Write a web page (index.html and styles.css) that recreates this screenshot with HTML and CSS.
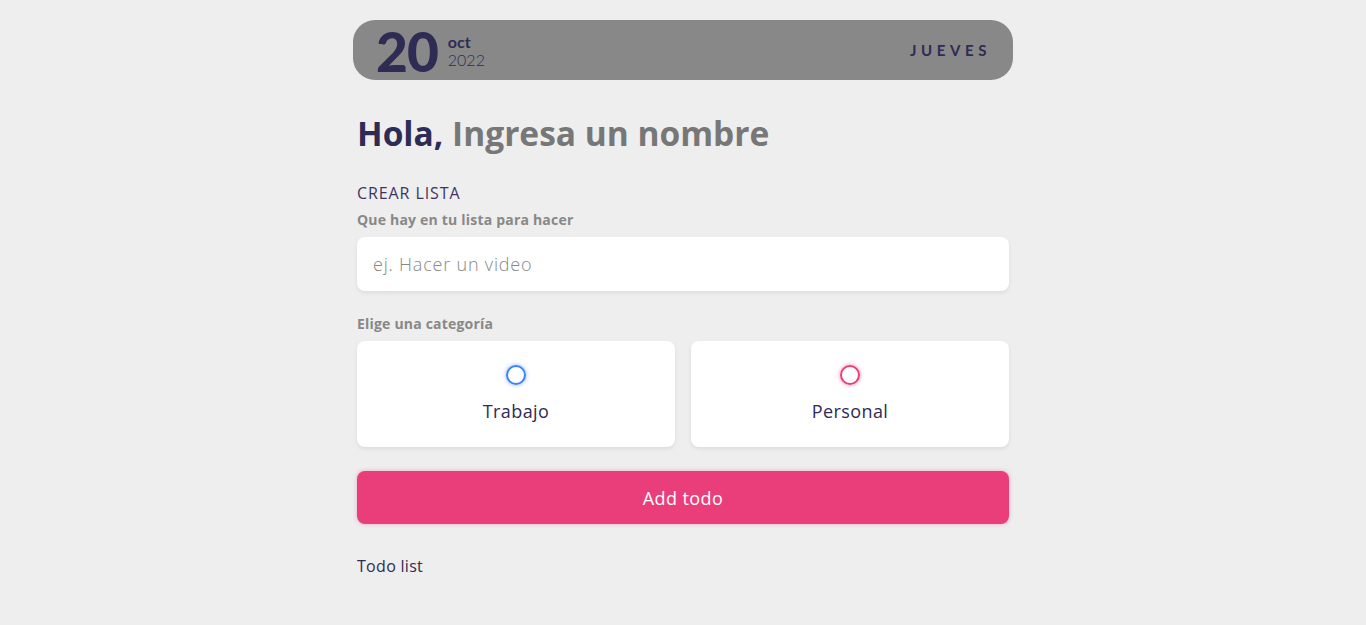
FILE: index.html
```html
<!DOCTYPE html>
<html lang="es">
<head>
<meta charset="utf-8">
<title>Todo</title>
<link rel="stylesheet" href="styles.css">
</head>
<body>
<main class="page">
  <header class="datebar">
    <div class="date">
      <span class="day">20</span>
      <span class="monthyear">
        <span class="month">oct</span>
        <span class="year">2022</span>
      </span>
    </div>
    <span class="weekday">JUEVES</span>
  </header>

  <h1 class="greeting">Hola, <span class="name">Ingresa un nombre</span></h1>

  <section class="create">
    <h2 class="section-title">CREAR LISTA</h2>
    <label class="field-label">Que hay en tu lista para hacer</label>
    <div class="input">ej. Hacer un video</div>

    <label class="field-label cat-label">Elige una categoría</label>
    <div class="options">
      <div class="option">
        <span class="bubble blue"></span>
        <span class="option-text">Trabajo</span>
      </div>
      <div class="option">
        <span class="bubble pink"></span>
        <span class="option-text">Personal</span>
      </div>
    </div>

    <button class="add">Add todo</button>
  </section>

  <h3 class="list-title">Todo list</h3>
</main>
</body>
</html>
```

FILE: styles.css
```css
* { box-sizing: border-box; }
html, body { margin: 0; padding: 0; }
body {
  background: #eeeeee;
  font-family: "Open Sans", "Noto Sans", sans-serif;
  color: #2e2b55;
}
.page {
  width: 652px;
  margin: 0 auto;
  padding-top: 20px;
}
.datebar {
  margin: 0 -4px;
  height: 60px;
  background: #888888;
  border-radius: 22px;
  display: flex;
  align-items: center;
  justify-content: space-between;
  padding: 0 25px 0 23px;
  font-family: Lato, sans-serif;
  color: #2e2b55;
}
.date { display: flex; align-items: center; gap: 10px; }
.day { font-size: 55px; font-weight: 900; line-height: 1; letter-spacing: -1px; margin-top: 2px; }
.monthyear { display: flex; flex-direction: column; line-height: 18px; margin-top: 2px; }
.month { font-size: 16px; font-weight: 700; }
.year { font-size: 16px; font-weight: 300; }
.weekday { font-size: 15px; font-weight: 700; letter-spacing: 4.6px; margin-right: -3px; }

.greeting {
  margin: 33px 0 0 0;
  font-size: 33.5px;
  font-weight: 700;
  line-height: 40px;
  color: #2e2b55;
}
.name { color: #777777; }

.create { margin-top: 30px; }
.section-title {
  margin: 0;
  font-size: 16px;
  font-weight: 400;
  letter-spacing: 0.9px;
  line-height: 20px;
  color: #3e3463;
}
.field-label {
  display: block;
  margin-top: 8px;
  font-size: 14px;
  font-weight: 700;
  letter-spacing: 0.2px;
  line-height: 17px;
  color: #888888;
}
.input {
  margin-top: 9px;
  height: 54px;
  background: #ffffff;
  border-radius: 8px;
  box-shadow: 0 2px 4px rgba(0,0,0,0.08);
  display: flex;
  align-items: center;
  padding: 0 16px;
  font-size: 18px;
  font-weight: 300;
  letter-spacing: 0.8px;
  color: #888888;
}
.cat-label { margin-top: 24px; }
.options {
  margin-top: 9px;
  display: grid;
  grid-template-columns: 1fr 1fr;
  gap: 16px;
}
.option {
  height: 106px;
  background: #ffffff;
  border-radius: 8px;
  box-shadow: 0 2px 4px rgba(0,0,0,0.08);
  display: flex;
  flex-direction: column;
  align-items: center;
  padding-top: 24px;
}
.bubble {
  width: 20px;
  height: 20px;
  border-radius: 50%;
  border: 2px solid;
}
.bubble.blue { border-color: #3a82f7; box-shadow: 0 0 4px rgba(58,130,247,0.6); }
.bubble.pink { border-color: #ea3e7a; box-shadow: 0 0 4px rgba(234,62,122,0.6); }
.option-text {
  margin-top: 14px;
  font-size: 18px;
  font-weight: 400;
  letter-spacing: 0.4px;
  color: #2e2b55;
}
.add {
  display: block;
  width: 100%;
  margin-top: 24px;
  height: 53px;
  border: none;
  border-radius: 8px;
  background: #ea3e7a;
  box-shadow: 0 0 4px rgba(234,62,122,0.4);
  color: #ffffff;
  font-family: inherit;
  font-size: 18px;
  font-weight: 400;
  letter-spacing: 0.4px;
}
.list-title {
  margin: 32px 0 0 0;
  font-size: 16px;
  font-weight: 400;
  letter-spacing: 0.3px;
  line-height: 20px;
  color: #2e2b55;
}
```
